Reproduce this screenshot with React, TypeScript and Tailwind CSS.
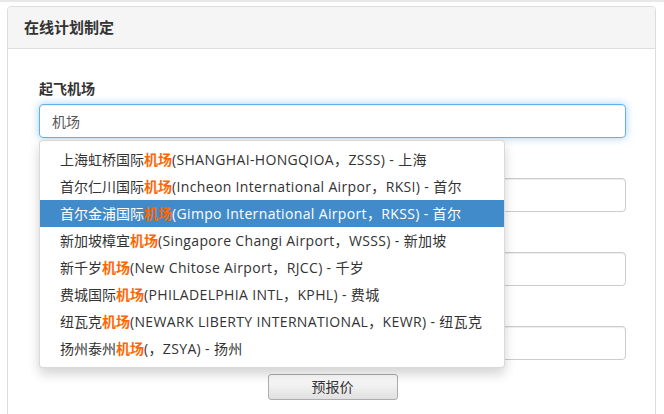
const airports = [
  { pre: "上海虹桥国际", post: "(SHANGHAI-HONGQIOA，ZSSS) - 上海" },
  { pre: "首尔仁川国际", post: "(Incheon International Airpor，RKSI) - 首尔" },
  { pre: "首尔金浦国际", post: "(Gimpo International Airport，RKSS) - 首尔" },
  { pre: "新加坡樟宜", post: "(Singapore Changi Airport，WSSS) - 新加坡" },
  { pre: "新千岁", post: "(New Chitose Airport，RJCC) - 千岁" },
  { pre: "费城国际", post: "(PHILADELPHIA INTL，KPHL) - 费城" },
  { pre: "纽瓦克", post: "(NEWARK LIBERTY INTERNATIONAL，KEWR) - 纽瓦克" },
  { pre: "扬州泰州", post: "(，ZSYA) - 扬州" },
];

const fields = ["到达机场", "起飞日期", "乘客人数"];

export default function App() {
  const active = 2;

  return (
    <div
      className="h-[414px] w-[664px] overflow-hidden bg-white border-t-2 border-[#e8e8e8] text-[14px] text-[#333]"
      style={{ fontFamily: '"Open Sans", "Noto Sans CJK SC", sans-serif' }}
    >
      <div className="ml-[7px] mr-[8px] mt-[4px] h-[420px] border border-[#ddd] rounded-t-[4px]">
        <div className="h-[42px] bg-[#f5f5f5] border-b border-[#ddd] px-[16px] flex items-center rounded-t-[4px]">
          <span className="text-[15px] font-bold text-[#333]">在线计划制定</span>
        </div>

        <div className="relative pl-[31px] pr-[29px] pt-[30px]">
          <div className="mb-[15px]">
            <label className="block h-[20px] leading-[20px] mb-[5px] font-bold">起飞机场</label>
            <div className="h-[34px] rounded-[4px] border border-[#66afe9] shadow-[inset_0_1px_1px_rgba(0,0,0,0.075),0_0_8px_rgba(102,175,233,0.6)] px-[12px] flex items-center text-[#555]">
              机场
            </div>
          </div>

          {fields.map(f => (
            <div key={f} className="mb-[15px]">
              <label className="block h-[20px] leading-[20px] mb-[5px] font-bold">{f}</label>
              <div className="h-[34px] rounded-[4px] border border-[#ccc] shadow-[inset_0_1px_1px_rgba(0,0,0,0.075)]" />
            </div>
          ))}

          <div className="flex justify-center -mt-[1px]">
            <button className="h-[26px] w-[130px] rounded-[3px] border border-[#adadad] bg-gradient-to-b from-[#ffffff] to-[#e0e0e0] text-[14px] text-[#333] leading-none">
              预报价
            </button>
          </div>

          <ul className="absolute left-[31px] top-[91px] w-[466px] py-[5px] bg-white border border-[rgba(0,0,0,0.15)] rounded-[4px] shadow-[0_6px_12px_rgba(0,0,0,0.175)]">
            {airports.map((a, i) => (
              <li
                key={i}
                className={`h-[27px] px-[20px] flex items-center whitespace-nowrap ${
                  i === active ? "bg-[#428bca] text-white" : "text-[#333]"
                }`}
              >
                {a.pre}
                <b className="text-[#ff6600] font-bold">机场</b>
                <span className="tracking-[0.35px]">{a.post}</span>
              </li>
            ))}
          </ul>
        </div>
      </div>
    </div>
  );
}
